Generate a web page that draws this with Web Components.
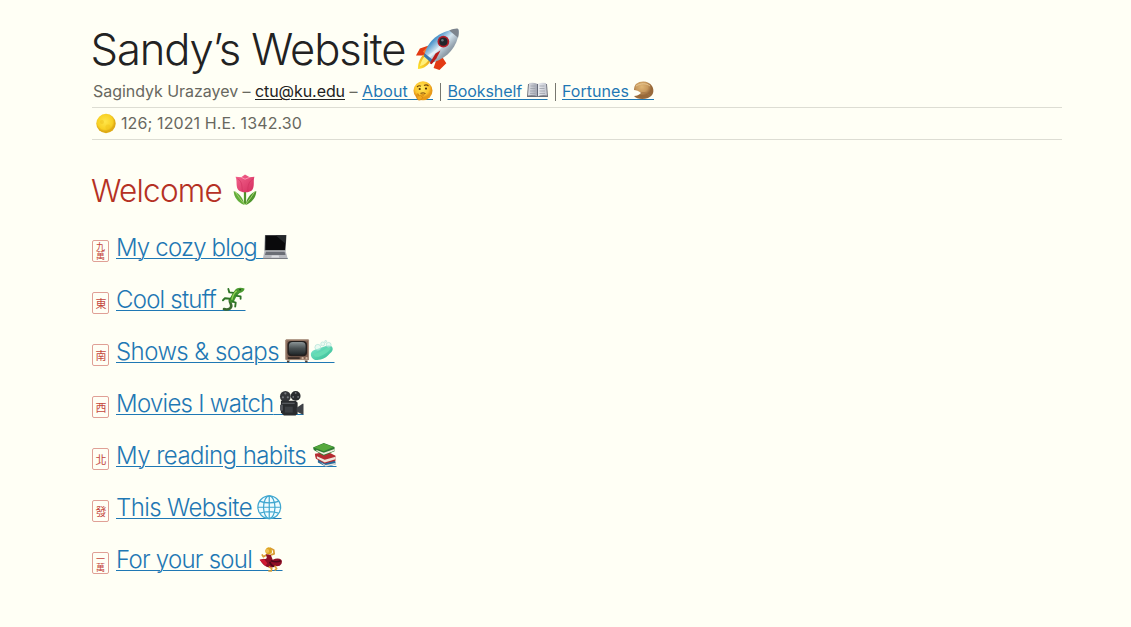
<!DOCTYPE html>
<html lang="en">
<head>
<meta charset="utf-8">
<title>Sandy’s Website</title>
<style>
html,body{margin:0;background:#fffff5;height:100%}
body{font-family:Inter,"Liberation Sans",sans-serif;color:#222;overflow:hidden}
</style>
</head>
<body>
<home-page></home-page>
<script>
const defs='<defs>'+
'<linearGradient id="steel" x1="0" y1="0" x2="1" y2="1"><stop offset="0" stop-color="#3f91d0"/><stop offset=".3" stop-color="#4f97cc"/><stop offset=".48" stop-color="#d5e6f0"/><stop offset=".65" stop-color="#98a6b2"/><stop offset="1" stop-color="#454b54"/></linearGradient>'+
'<linearGradient id="pink" x1="0" y1="0" x2="1" y2="1"><stop offset="0" stop-color="#f4668e"/><stop offset="1" stop-color="#d42d5e"/></linearGradient>'+
'<linearGradient id="flame" x1="1" y1="0" x2="0" y2="1"><stop offset="0" stop-color="#e0901c"/><stop offset="1" stop-color="#ffe62e"/></linearGradient>'+
'<radialGradient id="face" cx=".45" cy=".35"><stop offset="0" stop-color="#ffe95a"/><stop offset=".75" stop-color="#fcc52d"/><stop offset="1" stop-color="#e89a18"/></radialGradient>'+
'<radialGradient id="moon" cx=".45" cy=".4"><stop offset="0" stop-color="#ffe64a"/><stop offset=".8" stop-color="#f8d023"/><stop offset="1" stop-color="#dfab16"/></radialGradient>'+
'<radialGradient id="cookie" cx=".4" cy=".3"><stop offset="0" stop-color="#dfb676"/><stop offset=".6" stop-color="#c99a5e"/><stop offset="1" stop-color="#98693a"/></radialGradient>'+
'<linearGradient id="screen" x1="0" y1="0" x2="0" y2="1"><stop offset="0" stop-color="#8b9496"/><stop offset=".5" stop-color="#4a5254"/><stop offset="1" stop-color="#22282a"/></linearGradient>'+
'<linearGradient id="soap" x1="0" y1="0" x2="1" y2="1"><stop offset="0" stop-color="#80ead0"/><stop offset="1" stop-color="#30b98e"/></linearGradient>'+
'<linearGradient id="page" x1="0" y1="0" x2="1" y2="0"><stop offset="0" stop-color="#dfe1e6"/><stop offset=".5" stop-color="#a1a5b0"/><stop offset=".55" stop-color="#e9ebef"/><stop offset="1" stop-color="#c2c5ce"/></linearGradient></defs>';
const icons={
rocket:['0 0 48 48','<path d="M15 20 6 23 2 30 13 30zM29 32l4 6-7 7-6-2 3-9z" fill="#e33a13"/><path d="M15 20 9 26 13 30z" fill="#f6762d"/><path d="M10 29C6 32 4 38 4 44c6 0 11-4 14-10z" fill="url(#flame)"/><path d="M11 31c-3 3-4 7-5 10 5-1 8-4 10-8z" fill="#fff07a"/><path d="M11 28C14 16 25 5 44 3c2 0 2 1 2 3-2 15-11 26-26 31z" fill="url(#steel)"/><path d="M36 4.500c4-1.500 8-2.500 9-1.500s1 5 0 9z" fill="#7d858e"/><path d="M15 31c7-4 13-10 18-17" fill="none" stroke="#e4f0f7" stroke-width="2.500"/><path d="M11 28l10 8-3 2-8-7z" fill="#3979b0"/><path d="M22 28l5-3-4 8-5 6-2-1z" fill="#b91b18"/><circle cx="30" cy="16" r="6" fill="#b51d28"/><circle cx="30" cy="16" r="4.200" fill="#21262b"/><circle cx="29" cy="14.500" r="1.300" fill="#69727b"/>'],
tulip:['0 0 28 34','<path d="M14 17v15" stroke="#51942c" stroke-width="2.400"/><path d="M13.500 33C12 26 9 21 2 18c0 6 4 12 11.500 15z" fill="#62ad3a"/><path d="M14.500 33C16 26 19 21 26 18c0 6-4 12-11.500 15z" fill="#4f972d"/><path d="M3.500 18.500c3 5 6 9 10 13.500M24.500 18.500c-3 5-6 9-9.500 13.500" stroke="#a5d36f" fill="none"/><path d="M4 3l6 .5L14 .5l5 3 5-.5c-1.500 5 .5 9-2 13.500-2 4-13 4-15.500 0C4 12 6 8 4 3z" fill="url(#pink)"/><path d="M6 5c4 2 5 6 5 13M23 5c-5 3-6 7-6 13" fill="none" stroke="#cf315f" stroke-width=".7"/><path d="M10 3.500l4 2 5-2" fill="none" stroke="#ff9bb5"/>'],
think:['0 0 20 20','<circle cx="10" cy="9.800" r="9.500" fill="url(#face)"/><path d="M4 6q2-2 4-.8M11 4.500q2.500-1.500 4.500.500" stroke="#76460c" fill="none" stroke-width="1.100"/><circle cx="6.700" cy="8" r="1.100" fill="#513008"/><circle cx="13" cy="7.600" r="1.100" fill="#513008"/><path d="M7.500 12.300q3-1 5 .2" stroke="#76460c" fill="none"/><path d="M4 14q0-2 1.500-1v2l5-2q1.500 0 .5 1l-2.500 1.500q2 .5 0 3-3 1.500-4.500-.5z" fill="#f2a91c" stroke="#c97a12" stroke-width=".6"/>'],
book:['0 0 21 20','<path d="M1 3h19l1 13H0z" fill="#6c6f78"/><path d="M2 2q5-1 8.500 1Q14 1 19 2l1 12.500q-6-1-9.500 1-3.500-2-9.500-1z" fill="url(#page)"/><path d="M3.500 5h5M3.300 7.500h5M3 10h5.500M3 12.400h5.500M12.500 5h5M12.500 7.500h5M12.500 10h5.500M12.500 12.400h5.500" stroke="#9b9fa8" stroke-width=".8"/><path d="M10.500 3v12.500" stroke="#656a77"/>'],
cookie:['0 0 21 20','<path d="M3 3C8-1 16 0 19 5c3 5 1 10-4 12-5 2-12 1-14-2 3 0 5-1 7-3-2-2-5-3-7-3 0-3 1-5 2-6z" fill="url(#cookie)"/><path d="M8 12c3-1 6 0 9 3" stroke="#a37442" fill="none" stroke-width=".8"/><path d="M3 5c5-3 10-3 14 0" stroke="#ecd09e" fill="none" stroke-width=".8"/>'],
moon:['0 0 20 20','<circle cx="10" cy="9.500" r="9.700" fill="url(#moon)"/><circle cx="6" cy="8" r="2" fill="#e8b91a" opacity=".4"/><circle cx="12" cy="13" r="2.600" fill="#edbd1a" opacity=".4"/>'],
laptop:['0 0 25 25','<path d="M2 0h22l-1 16H1.500z" fill="#686b70"/><path d="M2.600.6h20.800l-1 14.700H2.400z" fill="#0a0a0c"/><path d="M13 .6h10.400l-.6 8z" fill="#24272a"/><path d="M1.500 16h21.500l2 7.500q0 1-1 1H.8q-1 0-.8-1z" fill="#b8babf"/><path d="M3 17h19l1 3.500H2z" fill="#6b6e75"/><path d="M9 21h7l.5 2H8.500z" fill="#dfe0e3"/><path d="M0 24h25" stroke="#77797e"/>'],
lizard:['0 0 25 25','<path d="M10 12c-4 3 4 7-1 10-2 1.500-4 1.200-6 .5" fill="none" stroke="#3c6a2e" stroke-width="2.600" stroke-linecap="round"/><path d="M17 4.500c-3 2-4 5-6 9" fill="none" stroke="#3f922b" stroke-width="5" stroke-linecap="round"/><path d="M13 6 8.500 5.500 7.500 2M16 9l4 .5V12M9 12l-5-.5-2 2M12 15l3 1-.5 4" fill="none" stroke="#2e7425" stroke-width="1.900" stroke-linecap="round" stroke-linejoin="round"/><path d="M14 4c1-3.500 6-4 10-2.500 0 3-4 5-7 5z" fill="#4b9a30"/><circle cx="19.500" cy="2.800" r=".8" fill="#152f10"/><path d="M16 4c-3 2-4 5-5 9" stroke="#94d054" stroke-width="1.400" fill="none"/>'],
tv:['0 0 25 25','<rect x=".5" y=".5" width="24" height="21" rx="1" fill="#806253"/><path d="M1 1h23v20H1z" fill="none" stroke="#a98d7b"/><path d="M2 22h3l-1 2H2zM20 22h3v2h-2z" fill="#514037"/><rect x="2.500" y="2" width="20" height="15.500" rx="4" fill="#24201f"/><rect x="4" y="3" width="17" height="13" rx="4" fill="url(#screen)"/><path d="M3 19.500h12" stroke="#3e3029" stroke-width="2"/><circle cx="18" cy="19.500" r="1.200" fill="#d1b39c"/><circle cx="22" cy="19.500" r="1.200" fill="#d1b39c"/>'],
soap:['0 0 25 25','<path d="M1 17q-1-4 4-6l12-4q5-1 6 2t-3 6q-3 4-9 6-8 2-10-4z" fill="url(#soap)"/><path d="M4 15q7-1 13-6 4-1 4 1-3 5-12 8-6 1-5-3z" fill="#67ddb4"/><g fill="#d8f7ef" fill-opacity=".5" stroke="#a4ddd3" stroke-width=".6"><circle cx="8" cy="8.500" r="3"/><circle cx="13" cy="5" r="2"/><circle cx="19" cy="6" r="2.500"/><circle cx="16" cy="2.500" r="1"/></g>'],
camera:['0 0 25 25','<circle cx="6.500" cy="5.500" r="5.500" fill="#34363a"/><circle cx="17" cy="5" r="5" fill="#292b2e"/><g fill="#777a7f"><circle cx="6.500" cy="2.500" r="1.100"/><circle cx="4" cy="6.500" r="1.100"/><circle cx="9" cy="6.500" r="1.100"/><circle cx="17" cy="2" r=".9"/><circle cx="14.500" cy="6" r=".9"/><circle cx="19.500" cy="6" r=".9"/></g><path d="M2 10h15l2 2v11l-2 2H5l-3-3z" fill="#292b2e"/><path d="M18 17l6-4h1v11h-1l-6-3z" fill="#3f4247"/><path d="M3 12.500h13" stroke="#666a70"/><path d="M6 16h8v6H6z" fill="#3c3f43"/><path d="M1 14h3v6H1z" fill="#55585e"/>'],
books:['0 0 25 25','<path d="M6 17l12-2 6 4v3l-9 2.500-9-4.500z" fill="#286b9b"/><path d="M8 19.500l6 3 10-2v1.500L14 24z" fill="#e9e5df"/><path d="M3 11l13-2 8 4v5l-11 3-9-5q-1-2-1-5z" fill="#b52c31"/><path d="M5 13.500l8 3.500 11-3v2.500L13 20l-8-4.500z" fill="#eee6db"/><path d="M1 4.500 12 0l11 4v4.500L12 13 4 8.500Q1 7 1 4.500z" fill="#2f7d32"/><path d="M2 4.500 12 .5l10 3.500-10 4.500z" fill="#56a93c"/><path d="M4 7l8 3 11-4v2L12 12 5 8.500z" fill="#f1eee1"/>'],
globe:['0 0 25 25','<g fill="none" stroke="#40a7d0" stroke-width="1.250"><circle cx="12.500" cy="12.500" r="11.600" fill="#effcff"/><ellipse cx="12.500" cy="12.500" rx="5.800" ry="11.600"/><path d="M12.500 1v23M1 12.500h23M3 6.500q9.500 3 19 0M3 18.500q9.500-3 19 0"/></g>'],
dancer:['0 0 25 25','<path d="M9 8 5.500 10 4 7.500M13 8l3.500-1-.5-4-4-2" stroke="#d99b35" stroke-width="1.800" fill="none" stroke-linejoin="round"/><path d="M7.500 3q1.500-3.500 4.500-2.500 3 1.500 2 6l-4 1.500q-3-2-2.500-5z" fill="#dda41f"/><circle cx="9.500" cy="4" r="1.900" fill="#f0bd55"/><path d="M8 7.500l5 .5 2 5q4-2 7-1 3.500 1 2 5-1.500 3-6 2.500-3 2-6.500 1.500-6-1-9.500-8l4-1q2 1 3-1z" fill="#8e0f26"/><path d="M1.500 13l5-.5 3 4-2 3z" fill="#cf1932"/><path d="M13 14q6 2 10 0M12 15q1 4 5 5" stroke="#4d0819" fill="none" stroke-width="1.600"/><path d="M17 19l2 3-2 2M11 20l3 2-.5 2.500h-3" stroke="#dca035" stroke-width="1.600" fill="none"/>']
};
function define(name,css,html,setup){
  const t=document.createElement('template');
  t.innerHTML='<style>'+css+'</style>'+html;
  customElements.define(name,class extends HTMLElement{
    constructor(){super();this.attachShadow({mode:'open'}).append(t.content.cloneNode(true))}
    connectedCallback(){if(setup)setup(this,this.shadowRoot)}
  });
}
define('emoji-icon',':host{display:block;flex:none}svg{display:block;width:100%;height:100%;overflow:visible}','<svg aria-hidden="true"></svg>',(el,r)=>{
  const i=icons[el.getAttribute('name')],s=el.getAttribute('size').split(' ');
  el.style.width=s[0]+'px';el.style.height=(s[1]||s[0])+'px';
  const svg=r.querySelector('svg');svg.setAttribute('viewBox',i[0]);svg.innerHTML=defs+i[1];
});
/* Spreads its text over the advance given in the width attribute; tail extends the final space. */
define('fit-text',':host{display:block;flex:none;white-space:pre}span{text-decoration:var(--deco,none);text-decoration-thickness:1px;text-underline-offset:2px}','<span class="t"></span><span class="tail"></span>',(el,r)=>{
  const stretch=(s,text,w)=>{s.textContent=text;s.style.letterSpacing=((w-s.getBoundingClientRect().width)/[...text].length)+'px'};
  const w=+el.getAttribute('width'),tail=+(el.getAttribute('tail')||0);
  stretch(r.querySelector('.t'),el.getAttribute('text'),w);
  if(tail)stretch(r.querySelector('.tail'),'\u00a0',tail);
  el.style.width=(w+tail)+'px';
});
define('emoji-link',
 ':host{display:flex;flex:none;color:#1f78b4;align-items:center;--deco:underline}a{display:flex;align-items:center;color:inherit;text-decoration:none}.pics{display:flex;width:0;justify-content:flex-end;gap:1px;transform:translateY(-1px)}',
 '<a href="#"><span class="pics"><slot></slot></span></a>',(el,r)=>{
  const f=document.createElement('fit-text');
  for(const k of ['text','width','tail'])f.setAttribute(k,el.getAttribute(k));
  r.querySelector('a').prepend(f);
});
define('mahjong-tile',
 ':host{display:flex;flex:none;align-items:center;justify-content:center;box-sizing:border-box;width:17px;height:22px;margin:6px 7px 0 0;border:1px solid #e0a096;border-radius:2px;color:#c4463c;font:400 11px/15px "Noto Sans CJK TC",sans-serif}:host([pair]){font-size:9px}span{writing-mode:vertical-rl;white-space:nowrap}',
 '<span><slot></slot></span>');
define('link-row',':host{display:flex;align-items:center;height:52px;font-size:24px;font-weight:300;line-height:52px}','<slot></slot>');
define('site-header',
 ':host{display:block}h1{display:flex;align-items:center;margin:0 0 0 -1.500px;height:50px;font-size:43.500px;font-weight:300;line-height:50px;color:#222}h1 emoji-icon{margin-left:8.500px}.meta{display:flex;align-items:center;height:31px;margin-top:2px;padding-left:1px;font-size:16px;line-height:31px;color:#68685f}.mail{color:#222;--deco:underline}.bar{width:1px;height:18px;background:#77776f;flex:none;margin:0 6.500px 0 7px}.status{display:flex;align-items:center;height:31px;border:solid #ddddd3;border-width:1px 0;padding-left:4px;font-size:16px;line-height:31px;color:#68685f}.status fit-text{margin-left:5px}',
 '<h1><fit-text text="Sandy’s Website" width="315"></fit-text><emoji-icon name="rocket" size="47"></emoji-icon></h1>'+
 '<div class="meta"><fit-text text="Sagindyk Urazayev – " width="162"></fit-text><fit-text class="mail" text="ctu@ku.edu" width="90"></fit-text><fit-text text=" – " width="17"></fit-text>'+
 '<emoji-link text="About" width="46" tail="25"><emoji-icon name="think" size="20"></emoji-icon></emoji-link><span class="bar"></span>'+
 '<emoji-link text="Bookshelf" width="74.500" tail="25.500"><emoji-icon name="book" size="21 20"></emoji-icon></emoji-link><span class="bar"></span>'+
 '<emoji-link text="Fortunes" width="67" tail="25"><emoji-icon name="cookie" size="21 20"></emoji-icon></emoji-link></div>'+
 '<div class="status"><emoji-icon name="moon" size="20"></emoji-icon><fit-text text="126; 12021 H.E. 1342.30" width="181"></fit-text></div>');
define('section-title',':host{display:flex;align-items:center;margin:28px 0 0 -1px;height:46px;font-size:31.500px;font-weight:300;line-height:46px;color:#b53124}','<slot></slot>');
const rows=[['九萬','My cozy blog',141,30.5,'laptop'],['東','Cool stuff',100,29.5,'lizard'],['南','Shows & soaps',163,55.5,'tv soap'],['西','Movies I watch',157.5,30,'camera'],['北','My reading habits',190,30.5,'books'],['發','This Website',136,29.5,'globe'],['一萬','For your soul',136,30.5,'dancer']];
define('home-page',':host{display:block;box-sizing:border-box;padding:24px 69px 0 92px}nav{display:block;margin-top:8px}',
 '<site-header></site-header><section-title><fit-text text="Welcome" width="131"></fit-text><emoji-icon name="tulip" size="28 32" style="margin:0 0 2px 8.500px"></emoji-icon></section-title><nav>'+
 rows.map(([t,x,w,tail,ic])=>'<link-row><mahjong-tile'+(t.length>1?' pair':'')+'>'+t+'</mahjong-tile><emoji-link text="'+x.replace('&','&amp;')+'" width="'+w+'" tail="'+tail+'">'+ic.split(' ').map(n=>'<emoji-icon name="'+n+'" size="24.500"></emoji-icon>').join('')+'</emoji-link></link-row>').join('')+'</nav>');
</script>
</body>
</html>
